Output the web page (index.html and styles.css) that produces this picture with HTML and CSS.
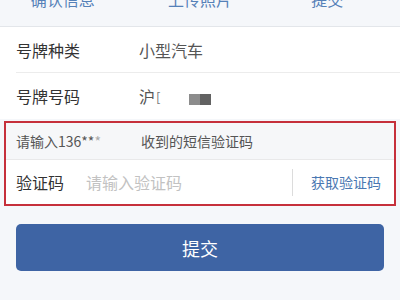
FILE: index.html
```html
<!DOCTYPE html>
<html lang="zh-CN">
<head>
    <meta charset="UTF-8">
    <meta name="viewport" content="width=device-width, initial-scale=1.0">
    <title>提交</title>
    <link rel="stylesheet" href="styles.css">
</head>
<body>
    <!-- Steps -->
    <div class="steps">
        <div class="step">确认信息</div>
        <div class="step">上传照片</div>
        <div class="step">提交</div>
    </div>

    <!-- Vehicle info -->
    <div class="info">
        <div class="info-row">
            <span class="info-label">号牌种类</span>
            <span class="info-value">小型汽车</span>
        </div>
        <div class="info-row">
            <span class="info-label">号牌号码</span>
            <span class="info-value">沪<span class="cut">[</span><span class="mosaic"><i class="m1"></i><i class="m2"></i></span></span>
        </div>
    </div>

    <!-- SMS verify -->
    <div class="verify">
        <div class="hint">请输入136**<span class="faint">*</span><span class="blur"></span>收到的短信验证码</div>
        <div class="code-row">
            <label class="code-label" for="code">验证码</label>
            <input type="text" id="code" class="code-input" placeholder="请输入验证码">
            <span class="sep"></span>
            <a href="#" class="get-code">获取验证码</a>
        </div>
    </div>

    <button type="button" class="submit-btn">提交</button>
</body>
</html>
```

FILE: styles.css
```css
* {
    margin: 0;
    padding: 0;
    box-sizing: border-box;
}

body {
    font-family: 'Noto Sans CJK SC', 'Noto Sans', sans-serif;
    background: #f5f7fa;
    overflow: hidden;
}

.steps {
    display: grid;
    grid-template-columns: 1fr 1fr 1fr;
    align-items: start;
    height: 27px;
    border-bottom: 1px solid #e3e6ea;
}

.step {
    margin-top: -9px;
    text-align: center;
    font-size: 16px;
    line-height: 16px;
    color: #5581b8;
}

.step:first-child {
    padding-right: 8px;
}

.step:last-child {
    padding-right: 12px;
}

.info {
    background: #fff;
    padding-left: 16px;
}

.info-row {
    display: flex;
    align-items: center;
    height: 46px;
}

.info-row:first-child {
    border-bottom: 1px solid #ececec;
}

.info-label {
    width: 123px;
    font-size: 16px;
    color: #333;
}

.info-value {
    display: flex;
    align-items: center;
    font-size: 16px;
    color: #555;
}

.cut {
    font-size: 13px;
    color: #777;
    margin-left: 1px;
}

.mosaic {
    display: flex;
    margin-left: 29px;
    margin-top: 6px;
}

.mosaic i {
    width: 11px;
    height: 11px;
}

.m1 {
    background: #8c8c8c;
}

.m2 {
    background: #626262;
}

.verify {
    margin: 2px 4px 0;
    border: 2px solid #c6303b;
}

.hint {
    display: flex;
    align-items: center;
    height: 37px;
    padding-left: 10px;
    background: #f6f7f9;
    border-bottom: 1px solid #e9e9ea;
    font-size: 14px;
    color: #555;
}

.faint {
    color: #aaa;
}

.blur {
    width: 40px;
}

.code-row {
    display: flex;
    align-items: center;
    height: 44px;
    padding: 0 13px 0 10px;
    background: #fff;
}

.code-label {
    width: 70px;
    font-size: 16px;
    color: #333;
}

.code-input {
    flex: 1;
    border: none;
    outline: none;
    font-family: inherit;
    font-size: 16px;
    color: #333;
    background: transparent;
    min-width: 0;
}

.code-input::placeholder {
    color: #c2c2c2;
}

.sep {
    width: 1px;
    height: 27px;
    background: #dcdcdc;
    margin: 0 18px 0 0;
}

.get-code {
    font-size: 14px;
    color: #4a78b2;
    text-decoration: none;
}

.submit-btn {
    display: block;
    width: calc(100% - 32px);
    height: 47px;
    margin: 18px 16px 0;
    border: none;
    border-radius: 5px;
    background: #3e64a4;
    color: #fff;
    font-family: inherit;
    font-size: 18px;
    cursor: pointer;
}
```
